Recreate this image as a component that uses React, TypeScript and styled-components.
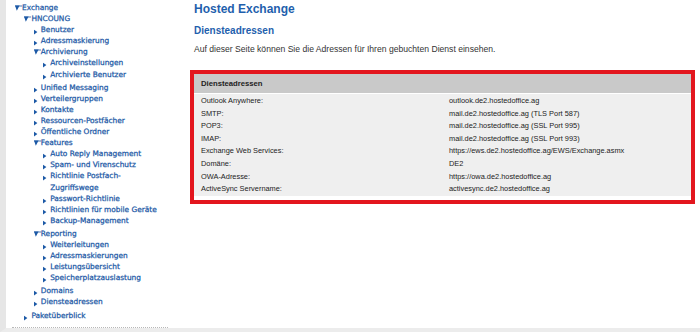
import { createGlobalStyle, styled } from "styled-components";

const GlobalStyle = createGlobalStyle`
  html, body {
    margin: 0;
    padding: 0;
    background: #fff;
  }
  body {
    font-family: "Liberation Sans", Arial, sans-serif;
  }
`;

type TreeNode = { label: string; children?: TreeNode[] };

const tree: TreeNode[] = [
  {
    label: "Exchange",
    children: [
      {
        label: "HNCOUNG",
        children: [
          { label: "Benutzer" },
          { label: "Adressmaskierung" },
          {
            label: "Archivierung",
            children: [
              { label: "Archiveinstellungen" },
              { label: "Archivierte Benutzer" },
            ],
          },
          { label: "Unified Messaging" },
          { label: "Verteilergruppen" },
          { label: "Kontakte" },
          { label: "Ressourcen-Postfächer" },
          { label: "Öffentliche Ordner" },
          {
            label: "Features",
            children: [
              { label: "Auto Reply Management" },
              { label: "Spam- und Virenschutz" },
              { label: "Richtlinie Postfach-Zugriffswege" },
              { label: "Passwort-Richtlinie" },
              { label: "Richtlinien für mobile Geräte" },
              { label: "Backup-Management" },
            ],
          },
          {
            label: "Reporting",
            children: [
              { label: "Weiterleitungen" },
              { label: "Adressmaskierungen" },
              { label: "Leistungsübersicht" },
              { label: "Speicherplatzauslastung" },
            ],
          },
          { label: "Domains" },
          { label: "Diensteadressen" },
        ],
      },
      { label: "Paketüberblick" },
    ],
  },
];

const services = [
  ["Outlook Anywhere:", "outlook.de2.hostedoffice.ag"],
  ["SMTP:", "mail.de2.hostedoffice.ag (TLS Port 587)"],
  ["POP3:", "mail.de2.hostedoffice.ag (SSL Port 995)"],
  ["IMAP:", "mail.de2.hostedoffice.ag (SSL Port 993)"],
  ["Exchange Web Services:", "https://ews.de2.hostedoffice.ag/EWS/Exchange.asmx"],
  ["Domäne:", "DE2"],
  ["OWA-Adresse:", "https://owa.de2.hostedoffice.ag"],
  ["ActiveSync Servername:", "activesync.de2.hostedoffice.ag"],
];

// small tree toggles: "open" is a flag-like down triangle, closed is a tiny right triangle
const Arrow = ({ open }: { open: boolean }) => (
  <ArrowBox width="7" height="11" viewBox="0 0 7 11">
    {open ? (
      <>
        <rect x="0" y="3.6" width="7" height="0.8" fill="#1c59a6" />
        <polygon points="0,3.6 4.6,3.6 1.8,8.8" fill="#1c59a6" />
      </>
    ) : (
      <polygon points="0,5.8 3.4,8.1 0,10.4" fill="#1c59a6" />
    )}
  </ArrowBox>
);

const Tree = ({ nodes, nested }: { nodes: TreeNode[]; nested?: boolean }) => (
  <TreeList $nested={nested}>
    {nodes.map((node) => (
      <li key={node.label}>
        <TreeRow>
          <Arrow open={!!node.children} />
          <TreeLink>{node.label}</TreeLink>
        </TreeRow>
        {node.children && <Tree nodes={node.children} nested />}
      </li>
    ))}
  </TreeList>
);

const App = () => {
  return (
    <>
      <GlobalStyle />
      <Page>
        <Sidebar>
          <Tree nodes={tree} />
          <Separator />
        </Sidebar>
        <Main>
          <Title>Hosted Exchange</Title>
          <SubTitle>Diensteadressen</SubTitle>
          <Intro>
            Auf dieser Seite können Sie die Adressen für Ihren gebuchten Dienst
            einsehen.
          </Intro>
          <Highlight>
            <ServiceTable>
              <HeaderCell>Diensteadressen</HeaderCell>
              <Rows>
                {services.map(([label, value]) => (
                  <Row key={label}>
                    <Cell>{label}</Cell>
                    <Cell>{value}</Cell>
                  </Row>
                ))}
              </Rows>
            </ServiceTable>
          </Highlight>
        </Main>
      </Page>
    </>
  );
};

const Page = styled.div`
  display: flex;
  height: 332px;
  box-sizing: border-box;
  border-left: 6px solid #e6e6e6;
  border-bottom: 4px solid #ececec;
`;

const Sidebar = styled.nav`
  width: 184px;
  flex-shrink: 0;
  padding-top: 2px;
`;

const TreeList = styled.ul<{ $nested?: boolean }>`
  list-style: none;
  margin: 0 0 ${(p) => (p.$nested ? "2px" : "0")} 0;
  padding: 0 0 0 ${(p) => (p.$nested ? "9.4px" : "9px")};
  width: ${(p) => (p.$nested ? "auto" : "152px")};
`;

const TreeRow = styled.div`
  display: flex;
  align-items: flex-start;
`;

const ArrowBox = styled.svg`
  flex-shrink: 0;
  display: block;
`;

const TreeLink = styled.a`
  font-family: "DejaVu Sans", Verdana, sans-serif;
  font-size: 7.4px;
  line-height: 11.1px;
  color: #1c59a6;
  -webkit-text-stroke: 0.25px #1c59a6;
  text-decoration: none;
  cursor: pointer;
`;

const Separator = styled.div`
  margin: 6px 0 0 6px;
  width: 156px;
  border-top: 1px dotted #b8b8b8;
`;

const Main = styled.main`
  flex: 1;
  padding: 1px 5px 0 0;
  color: #333;
`;

const Title = styled.h1`
  margin: 0;
  padding-left: 4px;
  font-size: 12px;
  line-height: 16px;
  font-weight: bold;
  color: #1f5fad;
`;

const SubTitle = styled.h2`
  margin: 7px 0 0;
  padding-left: 4px;
  font-size: 10px;
  line-height: 14px;
  font-weight: bold;
  color: #1f5fad;
`;

const Intro = styled.p`
  margin: 5px 0 0;
  padding-left: 4px;
  font-size: 8.6px;
  line-height: 12px;
  color: #333;
`;

const Highlight = styled.div`
  margin-top: 15px;
  border: 4px solid #e3161e;
  padding-bottom: 4px;
`;

const ServiceTable = styled.div`
  display: flex;
  flex-direction: column;
  gap: 1px;
  font-size: 7.4px;
  color: #222;
`;

const HeaderCell = styled.div`
  height: 19px;
  line-height: 19px;
  padding-left: 7px;
  background: #c9c9c9;
  font-weight: bold;
  font-size: 7.7px;
`;

const Rows = styled.div`
  background: #efefef;
  padding-top: 1px;
`;

const Row = styled.div`
  display: grid;
  grid-template-columns: 248px 1fr;
  height: 12.6px;
  line-height: 12.6px;
`;

const Cell = styled.div`
  padding-left: 7px;
  white-space: nowrap;
`;

export default App;
